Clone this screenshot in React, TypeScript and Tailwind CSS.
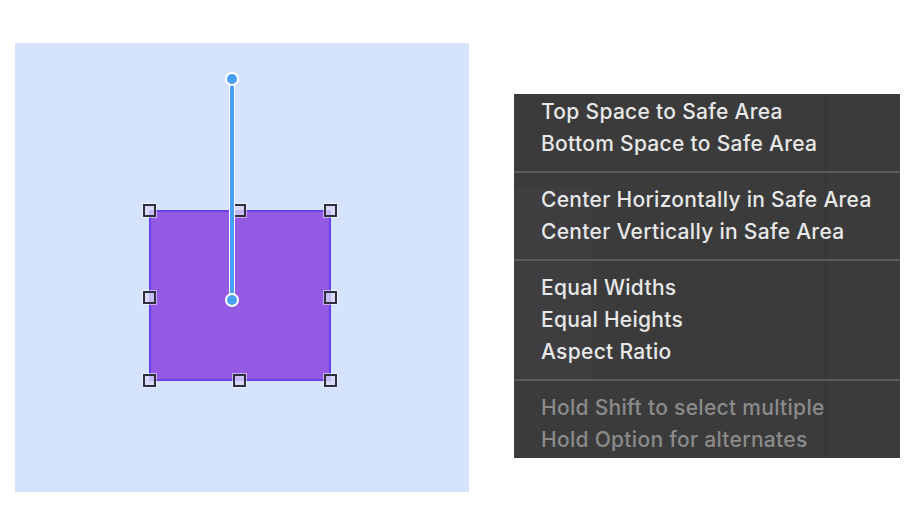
import React from 'react';

const handles = [
    [149, 210], [239, 210], [330, 210],
    [149, 297], [330, 297],
    [149, 380], [239, 380], [330, 380],
];

function Canvas() {
    return (
        <div className="relative w-[454px] h-[449px] bg-[#d5e3fc] shrink-0">
            {/* purple view */}
            <div className="absolute left-[134px] top-[167px] w-[182px] h-[171px] bg-[#955ae4] border-2 border-[#6a40ee]" />

            {/* resize handles */}
            {handles.map(([x, y]) => (
                <div
                    key={`${x}-${y}`}
                    className="absolute w-[13px] h-[13px] border-2 border-[#2e2e3c] bg-[#d9d6f8]/80 shadow-[0_0_0_1px_rgba(255,255,255,0.5)]"
                    style={{ left: x - 15 - 6, top: y - 43 - 6 }}
                />
            ))}

            {/* constraint line */}
            <div className="absolute left-[214px] top-[36px] w-[6px] h-[222px] bg-white" />
            <div className="absolute left-[215px] top-[36px] w-[4px] h-[222px] bg-[#48a0f6]" />
            <div className="absolute left-[210px] top-[29px] w-[14px] h-[14px] rounded-full bg-[#48a0f6] border-2 border-white" />
            <div className="absolute left-[210px] top-[250px] w-[14px] h-[14px] rounded-full bg-[#48a0f6] border-2 border-white" />
        </div>
    );
}

function Item({ label, muted }: { label: string; muted?: boolean }) {
    return (
        <div className={`h-[32px] leading-[32px] pl-[27px] whitespace-nowrap ${muted ? 'text-[#8b8b8b]' : 'text-[#e8e8e8]'}`}>
            {label}
        </div>
    );
}

function Separator() {
    return <div className="h-[2px] my-[11px] bg-[#5b5b5b]" />;
}

function Menu() {
    return (
        <div
            className="relative w-[386px] h-[364px] bg-[#3b3b3b] overflow-hidden text-[21px] font-medium tracking-[0.3px]"
            style={{ fontFamily: 'Inter, "Liberation Sans", sans-serif' }}
        >
            {/* faint content behind the translucent menu */}
            <div className="absolute left-[311px] top-0 w-[1px] h-full bg-[#333333]" />
            <div className="absolute left-0 top-[94px] w-[78px] h-[190px] bg-[#413f44]/60" />

            <div className="relative pt-[2px]">
                <Item label="Top Space to Safe Area" />
                <Item label="Bottom Space to Safe Area" />
                <Separator />
                <Item label="Center Horizontally in Safe Area" />
                <Item label="Center Vertically in Safe Area" />
                <Separator />
                <Item label="Equal Widths" />
                <Item label="Equal Heights" />
                <Item label="Aspect Ratio" />
                <Separator />
                <Item label="Hold Shift to select multiple" muted />
                <Item label="Hold Option for alternates" muted />
            </div>
        </div>
    );
}

export default function App() {
    return (
        <div className="w-[920px] h-[518px] bg-white flex items-start pl-[15px] pt-[43px]">
            <Canvas />
            <div className="ml-[45px] mt-[51px]">
                <Menu />
            </div>
        </div>
    );
}
